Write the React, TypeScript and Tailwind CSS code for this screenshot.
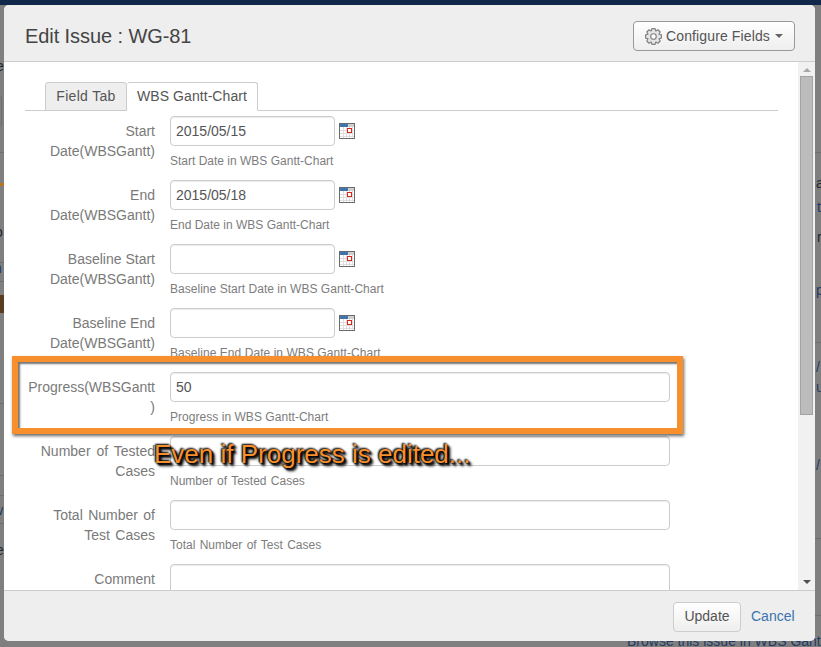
import React from "react";

interface FieldRow {
    label: React.ReactNode;
    help: string;
    value?: string;
    date?: boolean;
    labelClass?: string;
    helpClass?: string;
}

const rows: FieldRow[] = [
    { label: <>Start<br />Date(WBSGantt)</>, help: "Start Date in WBS Gantt-Chart", value: "2015/05/15", date: true },
    { label: <>End<br />Date(WBSGantt)</>, help: "End Date in WBS Gantt-Chart", value: "2015/05/18", date: true },
    { label: <>Baseline Start<br />Date(WBSGantt)</>, help: "Baseline Start Date in WBS Gantt-Chart", date: true, helpClass: "tracking-[0.03px]" },
    { label: <>Baseline End<br />Date(WBSGantt)</>, help: "Baseline End Date in WBS Gantt-Chart", date: true, helpClass: "tracking-[0.05px]" },
    { label: <>Progress(WBSGantt<br />)</>, help: "Progress in WBS Gantt-Chart", value: "50", helpClass: "tracking-[0.04px]" },
    { label: <>Number of Tested<br />Cases</>, help: "Number of Tested Cases", labelClass: "[word-spacing:2px]", helpClass: "[word-spacing:1px]" },
    { label: <>Total Number of<br />Test Cases</>, help: "Total Number of Test Cases", labelClass: "[word-spacing:1.5px]", helpClass: "[word-spacing:1px]" },
    { label: "Comment", help: "" },
];

// bits of the page behind the dialog
const scraps = [
    { text: "e", className: "left-[-4px] top-[56px] text-[#1c2733]" },
    { text: "o", className: "left-[-5px] top-[222px] text-[#1c2733]" },
    { text: "n", className: "left-[-6px] top-[258px] text-[#1f3a63]" },
    { text: "w", className: "left-[-7px] top-[500px] text-[#1f3a63]" },
    { text: "e", className: "left-[-4px] top-[540px] text-[#1c2733]" },
    { text: "a", className: "left-[816px] top-[173px] text-[#1c2733]" },
    { text: "t", className: "left-[817px] top-[197px] text-[#1f3a63]" },
    { text: "r", className: "left-[817px] top-[227px] text-[#1c2733]" },
    { text: "p", className: "left-[816px] top-[280px] text-[#1f3a63]" },
    { text: "/", className: "left-[816px] top-[357px] text-[#1f3a63]" },
    { text: "u", className: "left-[816px] top-[377px] text-[#1f3a63]" },
    { text: "/", className: "left-[816px] top-[455px] text-[#1f3a63]" },
    { text: "Browse this issue in WBS Gantt", className: "left-[627px] top-[631px] text-[#1f3a63] whitespace-nowrap" },
];

// faint rules of the page behind, seen in the side strips
const backLines = [
    "top-[152px] left-0 w-[821px]",
    "top-[262px] left-0 w-[4px]",
    "top-[281px] left-0 w-[4px]",
    "top-[342px] left-[815px] w-[6px]",
    "top-[403px] left-0 w-[4px]",
    "top-[475px] left-0 w-[4px]",
    "top-[495px] left-0 w-[4px]",
    "top-[523px] left-0 w-[4px]",
    "top-[538px] left-[815px] w-[6px]",
    "top-[615px] left-[815px] w-[6px]",
];

const gearPath = (() => {
    const pts: string[] = [];
    const teeth = 8;
    for (let i = 0; i < teeth; i++) {
        const a = (i / teeth) * Math.PI * 2;
        const w = Math.PI / teeth;
        const at = (r: number, t: number) => `${(8 + r * Math.cos(t)).toFixed(2)} ${(8 + r * Math.sin(t)).toFixed(2)}`;
        pts.push(at(5.6, a - w), at(7.6, a - w * 0.5), at(7.6, a + w * 0.5), at(5.6, a + w));
    }
    return `M${pts.join("L")}Z`;
})();

const GearIcon = () => (
    <svg width="17" height="17" viewBox="0 0 16 16" className="shrink-0">
        <path d={gearPath} fill="#e4e4e4" stroke="#808080" strokeWidth="1.1" strokeLinejoin="round" />
        <circle cx="8" cy="8" r="2.6" fill="#fff" stroke="#808080" strokeWidth="1.1" />
    </svg>
);

const CalendarIcon = () => (
    <svg width="16" height="16" viewBox="0 0 16 16" className="shrink-0">
        <rect x="0.5" y="0.5" width="15" height="15" fill="#fff" stroke="#6b6b6b" />
        <rect x="1" y="1" width="8" height="3" fill="#3f74b0" />
        <rect x="9" y="1" width="6" height="3" fill="#cfcfcf" />
        <path d="M1 7.5h14M1 10.5h14M1 13.5h14M4.5 4v11M7.5 4v11M10.5 4v11M13.5 4v11" stroke="#dedede" strokeWidth="1" />
        <rect x="8.5" y="5.5" width="4" height="4" fill="#fff" stroke="#d9261c" />
    </svg>
);

const Row = ({ row }: { row: FieldRow }) => (
    <div className="flex h-[64px] shrink-0 gap-[15px]">
        <div className={`w-[130px] shrink-0 pt-[5px] text-right text-[14px] leading-[20px] text-[#7a7a7a] ${row.labelClass ?? ""}`}>
            {row.label}
        </div>
        <div className="flex-1">
            <div className="flex items-center gap-[4px]">
                <div
                    className={`h-[30px] rounded-[4px] border border-[#ccc] bg-white px-[5px] text-[14px] leading-[28px] text-[#555] shadow-[inset_0_1px_1px_rgba(0,0,0,0.075)] ${
                        row.date ? "w-[165px]" : "w-[500px]"
                    }`}
                >
                    {row.value}
                </div>
                {row.date && <CalendarIcon />}
            </div>
            <div className={`mt-[7px] text-[12px] leading-[17px] text-[#7d7d7d] ${row.helpClass ?? ""}`}>{row.help}</div>
        </div>
    </div>
);

export default function App() {
    return (
        <div className="relative h-[647px] w-[821px] overflow-hidden bg-[#7f7f7f] font-['Liberation_Sans',sans-serif]">
            <div className="h-[5px] bg-[#12284a]" />
            {backLines.map((c, i) => (
                <div key={i} className={`absolute h-px bg-[#6e6e6e] ${c}`} />
            ))}
            <div className="absolute left-0 top-[96px] h-[30px] w-[2px] rounded-r-[2px] border-r border-y border-[#6e6e6e]" />
            <div className="absolute left-0 top-[183px] h-[3px] w-[4px] bg-[#b9751f]" />
            <div className="absolute left-0 top-[295px] h-[18px] w-[4px] bg-[#5a3c20]" />
            {scraps.map((s, i) => (
                <span key={i} className={`absolute text-[14px] leading-[20px] ${s.className}`}>
                    {s.text}
                </span>
            ))}

            <div className="absolute left-[4px] top-[5px] flex h-[636px] w-[811px] flex-col overflow-hidden rounded-[5px] bg-white">
                <div className="flex h-[57px] shrink-0 items-center justify-between border-b border-[#ccc] bg-[#eee] pl-[21px] pr-[20px] pt-[6px]">
                    <h1 className="text-[20px] font-normal leading-[30px] tracking-[-0.08px] text-[#444]">Edit Issue : WG-81</h1>
                    <button className="flex h-[30px] w-[162px] items-center justify-center gap-[4px] rounded-[4px] border border-[#999] bg-gradient-to-b from-white to-[#eee] text-[14px] tracking-[0.12px] text-[#555]">
                        <GearIcon />
                        Configure Fields
                        <span className="ml-[1px] h-0 w-0 border-x-[4px] border-t-[4px] border-x-transparent border-t-[#666]" />
                    </button>
                </div>

                <div className="flex min-h-0 flex-1">
                    <div className="min-w-0 flex-1 overflow-hidden pl-[21px] pr-[20px] pt-[20px]">
                        <div className="flex h-[29px] items-end border-b border-[#ccc] pl-[20px]">
                            <div className="mb-[-1px] flex h-[29px] w-[82px] items-center justify-center rounded-t-[3px] border border-[#ccc] bg-[#eee] text-[14px] tracking-[0.3px] text-[#555]">
                                Field Tab
                            </div>
                            <div className="mb-[-1px] flex h-[29px] w-[131px] items-center justify-center rounded-t-[3px] border border-b-white border-[#ccc] border-l-0 bg-white text-[14px] tracking-[0.06px] text-[#555]">
                                WBS Gantt-Chart
                            </div>
                        </div>
                        <div className="flex flex-col pt-[5px]">
                            {rows.map((row, i) => (
                                <Row key={i} row={row} />
                            ))}
                        </div>
                    </div>
                    <div className="flex w-[17px] shrink-0 flex-col items-center bg-[#f1f1f1]">
                        <div className="mt-[6px] h-0 w-0 border-x-[4px] border-b-[4px] border-x-transparent border-b-[#a8a8a8]" />
                        <div className="mt-[4px] h-[339px] w-[13px] border border-[#a3a3a3] bg-[#bcbcbc]" />
                        <div className="mt-auto mb-[6px] h-0 w-0 border-x-[4px] border-t-[4px] border-x-transparent border-t-[#505050]" />
                    </div>
                </div>

                <div className="flex h-[51px] shrink-0 items-center justify-end gap-[10px] border-t border-[#ccc] bg-[#eee] pr-[19px] pt-[1px]">
                    <button className="h-[30px] w-[68px] rounded-[4px] border border-[#ccc] bg-gradient-to-b from-white to-[#eee] text-[14px] text-[#555]">
                        Update
                    </button>
                    <span className="w-[45px] text-[14px] text-[#3b73af]">Cancel</span>
                </div>
            </div>

            {/* annotation drawn over the screenshot */}
            <div className="absolute left-[12px] top-[356px] h-[78px] w-[671px] border-[6px] border-[#f7902c] shadow-[1px_2px_3px_rgba(0,0,0,0.6),inset_2px_2px_2px_rgba(0,0,0,0.55)]" />
            <div className="absolute left-[154px] top-[439px] whitespace-nowrap text-[26px] leading-[30px] text-[#f7902c] [text-shadow:0_0_2px_#000,1px_1px_2px_#000,-1px_-1px_2px_#000,2px_2px_2px_#000,3px_3px_3px_#000]">
                Even if Progress is edited...
            </div>
        </div>
    );
}
